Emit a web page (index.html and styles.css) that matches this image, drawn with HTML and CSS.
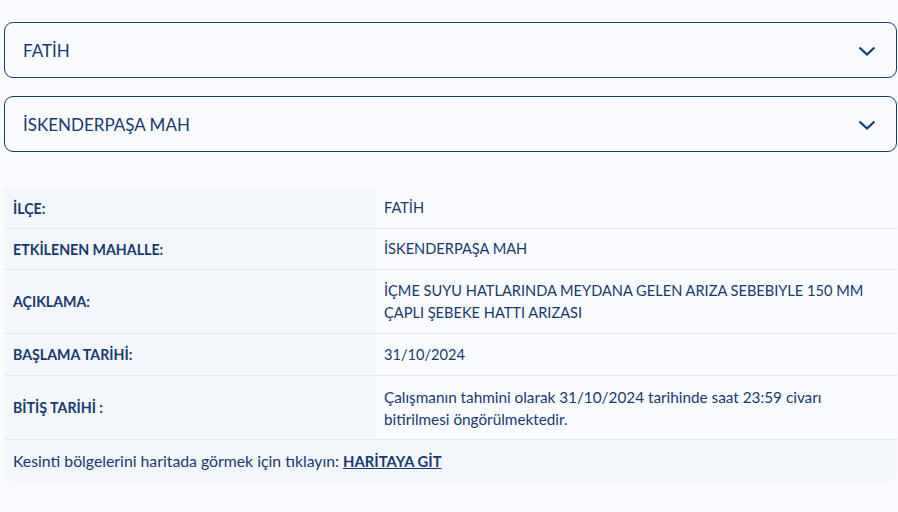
FILE: index.html
```html
<!DOCTYPE html>
<html lang="tr">
<head>
    <meta charset="UTF-8">
    <meta name="viewport" content="width=device-width, initial-scale=1.0">
    <title>Arıza Kesinti Bilgisi</title>
    <link rel="stylesheet" href="styles.css">
</head>
<body>
    <div class="page">
        <div class="select">
            <span>FATİH</span>
            <svg class="chevron" width="18" height="10" viewBox="0 0 18 10"><path d="M1.5 1.5 L9 8.5 L16.5 1.5" fill="none" stroke="#123d7a" stroke-width="2.2"/></svg>
        </div>
        <div class="select">
            <span>İSKENDERPAŞA MAH</span>
            <svg class="chevron" width="18" height="10" viewBox="0 0 18 10"><path d="M1.5 1.5 L9 8.5 L16.5 1.5" fill="none" stroke="#123d7a" stroke-width="2.2"/></svg>
        </div>

        <div class="info">
            <div class="row">
                <div class="label">İLÇE:</div>
                <div class="value">FATİH</div>
            </div>
            <div class="row">
                <div class="label">ETKİLENEN MAHALLE:</div>
                <div class="value">İSKENDERPAŞA MAH</div>
            </div>
            <div class="row tall">
                <div class="label">AÇIKLAMA:</div>
                <div class="value">İÇME SUYU HATLARINDA MEYDANA GELEN ARIZA SEBEBIYLE 150 MM ÇAPLI ŞEBEKE HATTI ARIZASI</div>
            </div>
            <div class="row date">
                <div class="label">BAŞLAMA TARİHİ:</div>
                <div class="value">31/10/2024</div>
            </div>
            <div class="row tall">
                <div class="label">BİTİŞ TARİHİ :</div>
                <div class="value text">Çalışmanın tahmini olarak 31/10/2024 tarihinde saat 23:59 civarı bitirilmesi öngörülmektedir.</div>
            </div>
            <div class="map-link">
                Kesinti bölgelerini haritada görmek için tıklayın: <a href="#">HARİTAYA GİT</a>
            </div>
        </div>
    </div>
</body>
</html>
```

FILE: styles.css
```css
body {
    margin: 0;
    padding: 0;
    background-color: #f9fbfe;
    color: #163a70;
    font-family: Lato, "Noto Sans", sans-serif;
}
.page {
    padding: 22px 1px 0 4px;
}
.select {
    display: flex;
    justify-content: space-between;
    align-items: center;
    height: 54px;
    padding: 0 20px 0 18px;
    border: 1px solid #123d7a;
    border-radius: 9px;
    margin-bottom: 18px;
    font-size: 17px;
    background: #f9fbfe;
}
.chevron {
    display: block;
    margin-top: 2px;
}
.info {
    margin-top: 36px;
    border-radius: 0 0 11px 11px;
    overflow: hidden;
    font-size: 14.6px;
}
.row {
    display: grid;
    grid-template-columns: 372px 1fr;
    border-bottom: 1px solid #e3e7ee;
}
.row .label {
    background: #f3f6fb;
    padding: 0 9px;
    height: 40px;
    display: flex;
    align-items: center;
    font-weight: 700;
    font-size: 14.2px;
}
.row .value {
    padding: 0 28px 0 8px;
    display: flex;
    align-items: center;
    line-height: 22px;
}
.row .value.text {
    font-size: 15.3px;
}
.row.tall .label {
    height: 63px;
}
.row.date .label {
    height: 41px;
}
.map-link {
    background: #f3f6fb;
    height: 42px;
    line-height: 42px;
    padding: 0 9px;
    font-size: 15.8px;
}
.map-link a {
    color: #163a70;
    font-weight: 700;
    text-decoration: underline;
    font-size: 14.8px;
}
```
